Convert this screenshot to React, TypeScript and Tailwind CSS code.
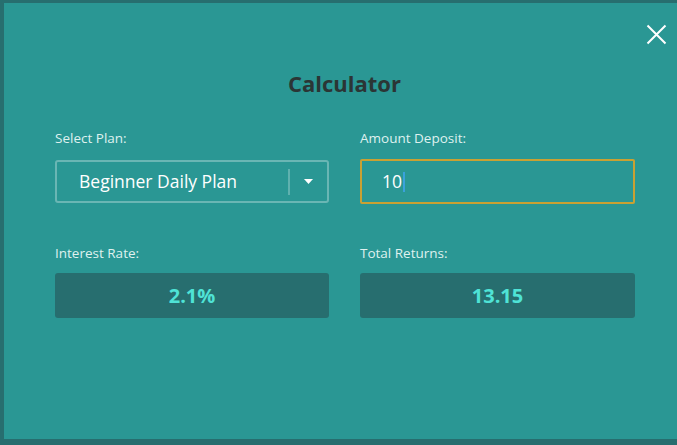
import React from 'react';

export default function App() {
  return (
    <div className="w-[677px] h-[445px] bg-[#276e6f] pl-[4px] pt-[3px] overflow-hidden font-['Open_Sans',sans-serif]">
      <div className="relative w-[673px] h-[436px] bg-[#2a9794] flex flex-col">
        <button className="absolute left-[640px] top-[19px] w-[24px] h-[24px] flex items-center justify-center">
          <svg width="21" height="21" viewBox="0 0 21 21" fill="none" stroke="#ffffff" strokeWidth="2">
            <path d="M1.5 1.5 L19.5 19.5 M19.5 1.5 L1.5 19.5" />
          </svg>
        </button>

        <h1 className="mt-[66px] h-[28px] text-center text-[22px] leading-[28px] font-bold text-[#2b3535] pl-[8px]">
          Calculator
        </h1>

        <div className="mt-[32px] pl-[51px] grid grid-cols-[274px_275px] gap-x-[31px]">
          <label className="text-[13.5px] leading-[18px] text-[#dff1ef] mb-[12px]">Select Plan:</label>
          <label className="text-[13.5px] leading-[18px] text-[#dff1ef] mb-[12px]">Amount Deposit:</label>

          <div className="self-center h-[43px] rounded-[3px] border-2 border-white/30 flex items-center">
            <span className="flex-1 pl-[22px] text-[17.5px] text-white">Beginner Daily Plan</span>
            <span className="w-[2px] h-[26px] bg-white/25" />
            <span className="w-[37px] flex justify-center">
              <svg width="9" height="5" viewBox="0 0 9 5">
                <path d="M0 0 H9 L4.5 5 Z" fill="#ffffff" />
              </svg>
            </span>
          </div>
          <div className="h-[45px] rounded-[2px] border-2 border-[#c9a133] flex items-center pl-[20px]">
            <span className="text-[17.5px] text-white">10</span>
            <span className="w-[2px] h-[20px] bg-[#3aa2dc] ml-[1px]" />
          </div>
        </div>

        <div className="mt-[40px] pl-[51px] grid grid-cols-[274px_275px] gap-x-[31px]">
          <label className="text-[13.5px] leading-[18px] text-[#dff1ef] mb-[11px]">Interest Rate:</label>
          <label className="text-[13.5px] leading-[18px] text-[#dff1ef] mb-[11px]">Total Returns:</label>

          <div className="h-[45px] rounded-[3px] bg-[#276e6f] flex items-center justify-center text-[20px] font-bold text-[#4fe3d6]">
            2.1%
          </div>
          <div className="h-[45px] rounded-[3px] bg-[#276e6f] flex items-center justify-center text-[20px] font-bold text-[#4fe3d6]">
            13.15
          </div>
        </div>
      </div>
    </div>
  );
}
